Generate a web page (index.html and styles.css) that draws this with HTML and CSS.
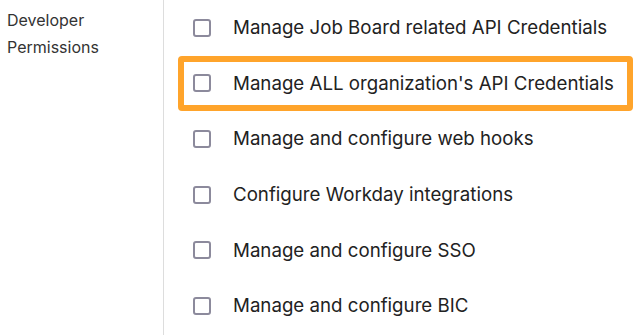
FILE: index.html
```html
<!DOCTYPE html>
<html lang="en">
<head>
  <meta charset="UTF-8" />
  <meta name="viewport" content="width=device-width, initial-scale=1.0"/>
  <title>Developer Permissions</title>
  <link rel="stylesheet" href="styles.css">
</head>
<body>
  <div class="section">
    <div class="section-label">Developer<br>Permissions</div>
    <div class="perm-list">
      <label class="perm"><input type="checkbox"><span class="box"></span>Manage Job Board related API Credentials</label>
      <label class="perm highlight"><input type="checkbox"><span class="box"></span>Manage ALL organization's API Credentials</label>
      <label class="perm"><input type="checkbox"><span class="box"></span>Manage and configure web hooks</label>
      <label class="perm"><input type="checkbox"><span class="box"></span>Configure Workday integrations</label>
      <label class="perm"><input type="checkbox"><span class="box"></span>Manage and configure SSO</label>
      <label class="perm"><input type="checkbox"><span class="box"></span>Manage and configure BIC</label>
    </div>
  </div>
</body>
</html>
```

FILE: styles.css
```css
body {
  margin: 0;
  font-family: Inter, "Open Sans", sans-serif;
  background: #fff;
  color: #222;
}
.section {
  display: flex;
  height: 335px;
}
.section-label {
  width: 156px;
  padding: 7px 0 0 7px;
  border-right: 1px solid #ddd;
  font-size: 16px;
  line-height: 27px;
  color: #333;
}
.perm-list {
  display: flex;
  flex-direction: column;
  padding-left: 14px;
}
.perm {
  display: flex;
  align-items: center;
  width: 455px;
  height: 55.6px;
  box-sizing: border-box;
  padding-left: 9px;
  border: 6px solid transparent;
  border-radius: 4px;
  font-size: 18.7px;
  cursor: pointer;
}
.perm.highlight {
  border-color: #ffa42b;
}
.perm input {
  display: none;
}
.box {
  width: 14px;
  height: 14px;
  border: 2px solid #8c8a9c;
  border-radius: 3px;
  margin-right: 22px;
  flex-shrink: 0;
}
```
